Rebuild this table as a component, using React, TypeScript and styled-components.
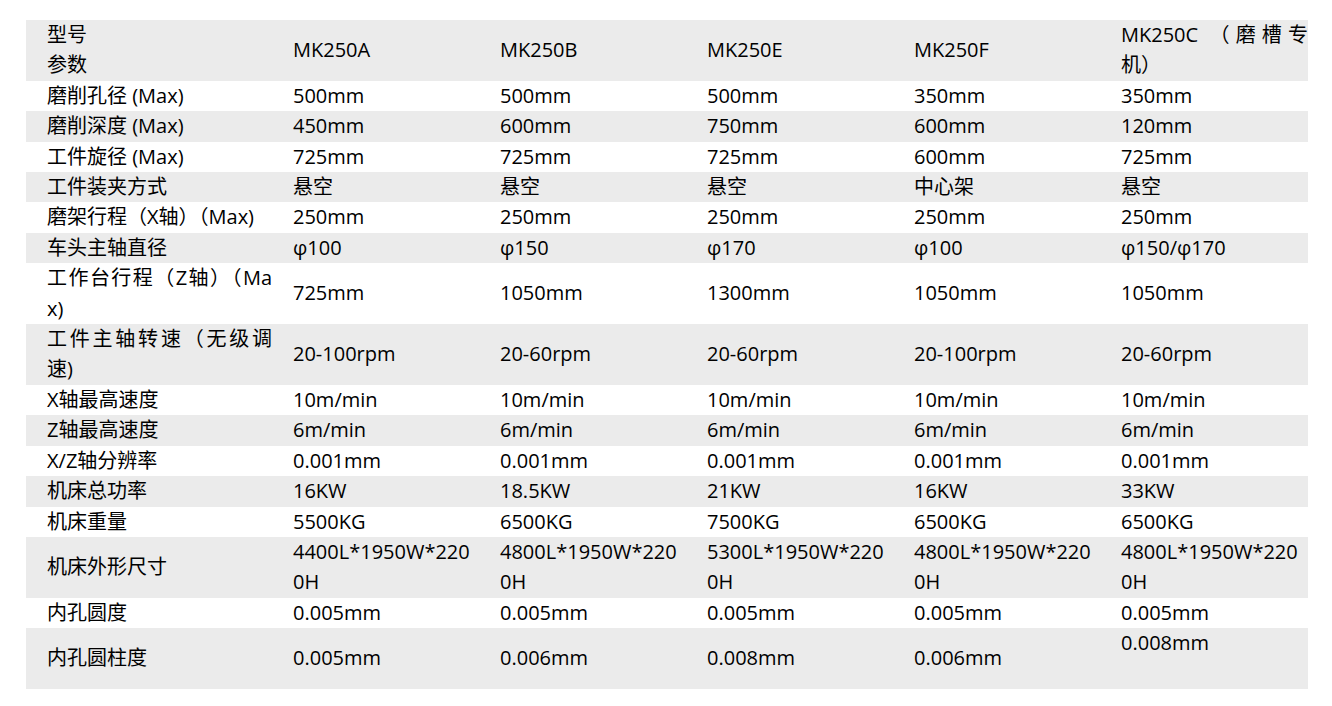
import styled, { createGlobalStyle } from 'styled-components';

const GlobalStyle = createGlobalStyle`
  body {
    margin: 0;
    background: #ffffff;
  }
`;

const Page = styled.div`
  padding: 20px 0 0 26px;
`;

const SpecTable = styled.table`
  width: 1282px;
  table-layout: fixed;
  border-collapse: collapse;
  font-family: "Open Sans", "Noto Sans CJK SC", sans-serif;
  font-size: 20px;
  line-height: 30.4px;
  color: #000;
`;

const Row = styled.tr`
  &:nth-child(odd) {
    background: #ebebeb;
  }
`;

const Cell = styled.td<{ $top?: boolean }>`
  padding: 0 0 0 21px;
  vertical-align: ${(props) => (props.$top ? 'top' : 'middle')};
  text-align: justify;
  word-break: break-all;
`;

const rows: string[][] = [
  ['磨削孔径 (Max)', '500mm', '500mm', '500mm', '350mm', '350mm'],
  ['磨削深度 (Max)', '450mm', '600mm', '750mm', '600mm', '120mm'],
  ['工件旋径 (Max)', '725mm', '725mm', '725mm', '600mm', '725mm'],
  ['工件装夹方式', '悬空', '悬空', '悬空', '中心架', '悬空'],
  ['磨架行程（X轴）（Max)', '250mm', '250mm', '250mm', '250mm', '250mm'],
  ['车头主轴直径', 'φ100', 'φ150', 'φ170', 'φ100', 'φ150/φ170'],
  ['工作台行程（Z轴）（Max)', '725mm', '1050mm', '1300mm', '1050mm', '1050mm'],
  ['工件主轴转速（无级调速)', '20-100rpm', '20-60rpm', '20-60rpm', '20-100rpm', '20-60rpm'],
  ['X轴最高速度', '10m/min', '10m/min', '10m/min', '10m/min', '10m/min'],
  ['Z轴最高速度', '6m/min', '6m/min', '6m/min', '6m/min', '6m/min'],
  ['X/Z轴分辨率', '0.001mm', '0.001mm', '0.001mm', '0.001mm', '0.001mm'],
  ['机床总功率', '16KW', '18.5KW', '21KW', '16KW', '33KW'],
  ['机床重量', '5500KG', '6500KG', '7500KG', '6500KG', '6500KG'],
  [
    '机床外形尺寸',
    '4400L*1950W*2200H',
    '4800L*1950W*2200H',
    '5300L*1950W*2200H',
    '4800L*1950W*2200H',
    '4800L*1950W*2200H',
  ],
  ['内孔圆度', '0.005mm', '0.005mm', '0.005mm', '0.005mm', '0.005mm'],
];

export default function App() {
  return (
    <Page>
      <GlobalStyle />
      <SpecTable>
        <colgroup>
          <col style={{ width: 246 }} />
          <col style={{ width: 207 }} />
          <col style={{ width: 207 }} />
          <col style={{ width: 207 }} />
          <col style={{ width: 207 }} />
          <col style={{ width: 208 }} />
        </colgroup>
        <tbody>
          <Row>
            <Cell>
              型号
              <br />
              参数
            </Cell>
            <Cell>MK250A</Cell>
            <Cell>MK250B</Cell>
            <Cell>MK250E</Cell>
            <Cell>MK250F</Cell>
            <Cell>MK250C （磨槽专机）</Cell>
          </Row>
          {rows.map((r) => (
            <Row key={r[0]}>
              {r.map((v, i) => (
                <Cell key={i}>{v}</Cell>
              ))}
            </Row>
          ))}
          <Row>
            <Cell>内孔圆柱度</Cell>
            <Cell>0.005mm</Cell>
            <Cell>0.006mm</Cell>
            <Cell>0.008mm</Cell>
            <Cell>0.006mm</Cell>
            <Cell $top>
              0.008mm
              <br />
              &nbsp;
            </Cell>
          </Row>
        </tbody>
      </SpecTable>
    </Page>
  );
}
